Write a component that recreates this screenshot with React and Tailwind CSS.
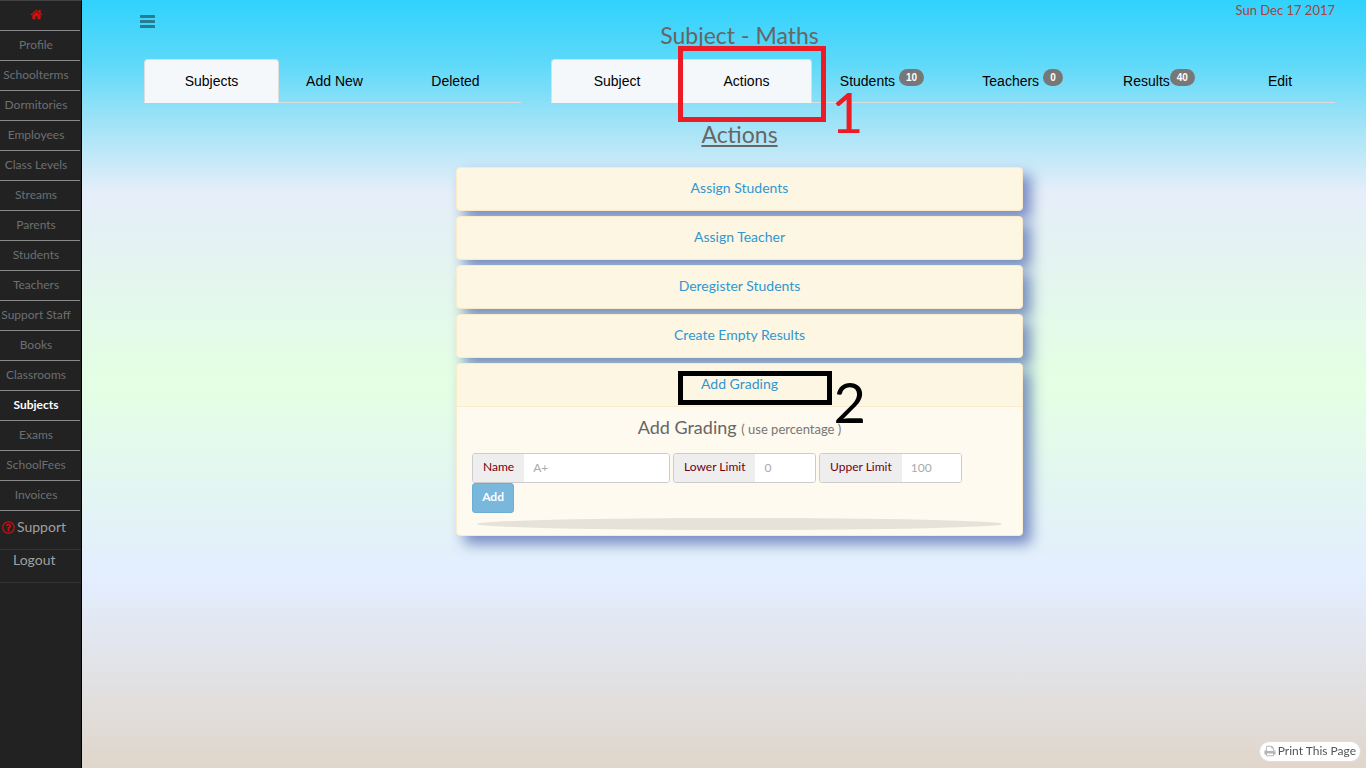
import React from "react";
import { FaRegQuestionCircle } from "react-icons/fa";

const menu = [
  "Profile", "Schoolterms", "Dormitories", "Employees", "Class Levels", "Streams",
  "Parents", "Students", "Teachers", "Support Staff", "Books", "Classrooms",
  "Subjects", "Exams", "SchoolFees", "Invoices",
];

const actions = ["Assign Students", "Assign Teacher", "Deregister Students", "Create Empty Results"];

function HomeIcon() {
  return (
    <svg viewBox="0 0 1792 1792" className="size-[13px]" fill="currentColor" aria-hidden="true">
      <path d="M1472 992v480q0 26-19 45t-45 19h-384v-384h-256v384h-384q-26 0-45-19t-19-45v-480q0-1 .5-3t.5-3l575-474 575 474q1 2 1 6zm223-69l-62 74q-8 9-21 11h-3q-13 0-21-7l-692-577-692 577q-12 8-24 7-13-2-21-11l-62-74q-8-10-7-23.5t11-21.5l719-599q32-26 76-26t76 26l244 204v-195q0-14 9-23t23-9h192q14 0 23 9t9 23v408l219 182q10 8 11 21.5t-7 23.5z" />
    </svg>
  );
}

function PrintIcon() {
  return (
    <svg viewBox="0 0 1792 1792" className="size-3 text-[#b5b5b5]" fill="currentColor" aria-hidden="true">
      <path d="M448 1536h896v-256h-896v256zm0-640h896v-384h-160q-40 0-68-28t-28-68v-160h-640v640zm1152 64q0-26-19-45t-45-19-45 19-19 45 19 45 45 19 45-19 19-45zm128 0v416q0 13-9.5 22.5t-22.5 9.5h-224v160q0 40-28 68t-68 28h-960q-40 0-68-28t-28-68v-160h-224q-13 0-22.5-9.5t-9.5-22.5v-416q0-79 56.5-135.5t135.5-56.5h64v-544q0-40 28-68t68-28h672q40 0 88 20t76 48l152 152q28 28 48 76t20 88v256h64q79 0 135.5 56.5t56.5 135.5z" />
    </svg>
  );
}

function Sidebar() {
  return (
    <nav className="w-[82px] shrink-0 border-r border-t border-r-black border-t-[#444] bg-[#222] text-center">
      <ul className="mr-px text-xs text-[#6c7073]">
        <li className="h-[30px] border-b border-[#8a8a8a]">
          <a href="#home" aria-label="Home" className="flex h-full items-center justify-center pb-[2px] pr-2 text-[#d01010]">
            <HomeIcon />
          </a>
        </li>
        {menu.map((m) => (
          <li key={m} className="h-[30px] border-b border-[#8a8a8a]">
            <a
              href="#menu"
              className={
                "flex h-full items-center justify-center whitespace-nowrap pb-[2px] pr-2 " +
                (m === "Subjects" ? "font-bold text-white" : "")
              }
            >
              {m}
            </a>
          </li>
        ))}
      </ul>
      <a href="#support" className="flex h-[39px] items-center gap-[2px] border-b border-[#333] pb-[6px] pl-[2px] text-sm text-[#a0a0a0]">
        <FaRegQuestionCircle className="size-[13px] text-[#d01010]" />
        Support
      </a>
      <a href="#logout" className="flex h-[33px] items-center border-b border-[#333] pb-3 pl-[13px] text-sm text-[#a0a0a0]">
        Logout
      </a>
    </nav>
  );
}

function Tab({ label, active, first, last, badge, tight, children }) {
  return (
    <a
      href="#tab"
      className={
        "relative flex h-11 items-center justify-center whitespace-nowrap border-b text-sm text-black " +
        (active
          ? "border-b-[#f4f8fb] border-t border-t-[#ddd] bg-[#f4f8fb] "
          : "border-[#ddd] ") +
        (first ? "rounded-tl border-l border-l-[#ddd] " : "") +
        (last ? "rounded-tr border-r border-r-[#ddd]" : "")
      }
    >
      {label}
      {badge && (
        <span
          className={
            "mb-[6px] rounded-full bg-[#777] px-[7px] text-[10px] font-bold leading-[17px] text-white " +
            (tight ? "" : "ml-1")
          }
        >
          {badge}
        </span>
      )}
      {children}
    </a>
  );
}

function Field({ id, label, placeholder, className }) {
  return (
    <div className={"flex h-[30px] overflow-hidden rounded-[3px] border border-[#ccc] bg-white text-xs " + className}>
      <label htmlFor={id} className="flex shrink-0 items-center bg-[#eee] px-[10px] pb-[2px] text-[#700010]">
        {label}
      </label>
      <input
        id={id}
        type="text"
        placeholder={placeholder}
        className="w-full min-w-0 bg-white px-[9px] outline-none placeholder:text-[#aaa]"
      />
    </div>
  );
}

const panel = "rounded border border-[#faebcc] shadow-[8px_8px_14px_rgba(29,56,153,0.55)]";

export default function App() {
  return (
    <div className="flex min-h-screen font-['Lato',sans-serif] text-[#666]">
      <Sidebar />
      <main className="min-w-0 flex-1 bg-[linear-gradient(#30d2fd_0%,#5cd9f9_8%,#a0e3f7_16%,#e5eef9_25%,#e3ffe3_50%,#e3eeff_75%,#e0d6cb_100%)] pl-[62px] pr-[31px]">
        <header className="relative h-[59px]">
          <button type="button" aria-label="Toggle menu" className="absolute -left-1 top-[15px] text-[#287c92]">
            <svg viewBox="0 0 15 13" className="h-[13px] w-[15px]" fill="currentColor">
              <rect width="15" height="3" rx="0.5" />
              <rect y="5" width="15" height="3" rx="0.5" />
              <rect y="10" width="15" height="3" rx="0.5" />
            </svg>
          </button>
          <h1 className="pt-5 text-center text-[23px] leading-[30px]">Subject - Maths</h1>
          <span className="absolute right-0 top-0 text-[13px] leading-5 text-[#a8423f]">Sun Dec 17 2017</span>
        </header>

        <div className="grid grid-cols-[377fr_784fr] gap-x-[30px] font-['Liberation_Sans',Arial,sans-serif]">
          <nav className="grid grid-cols-[135fr_111fr_131fr]">
            <Tab label="Subjects" active first last />
            <Tab label="Add New" />
            <Tab label="Deleted" />
          </nav>
          <nav className="grid grid-cols-[131fr_130fr_140fr_141fr_132fr_110fr]">
            <Tab label="Subject" active first />
            <Tab label="Actions" active last>
              <span className="pointer-events-none absolute -bottom-5 -left-1 -right-[15px] -top-[14px] z-10 border-5 border-[#ed1c24]" />
              <span className="pointer-events-none absolute left-full top-8 z-10 ml-5 font-['Lato',sans-serif] text-[56px] leading-10 text-[#ed1c24]">
                1
              </span>
            </Tab>
            <Tab label="Students" badge="10" />
            <Tab label="Teachers" badge="0" />
            <Tab label="Results" badge="40" tight />
            <Tab label="Edit" />
          </nav>
        </div>

        <h2 className="mb-[18px] mt-4 text-center text-[23px] leading-[30px] underline underline-offset-2">Actions</h2>

        <div className="mx-auto flex w-[47.6%] flex-col gap-[5px]">
          {actions.map((a) => (
            <a
              key={a}
              href="#action"
              className={"relative flex h-11 items-center justify-center bg-[#fdf6e3] pb-[2px] text-sm text-[#3097d1] " + panel}
            >
              {a}
            </a>
          ))}
          <section className={"relative bg-[#fefaef] " + panel}>
            <a
              href="#grading"
              className="relative flex h-[43px] items-center justify-center rounded-t border-b border-[#faebcc] bg-[#fdf6e3] pb-[2px] text-sm text-[#3097d1]"
            >
              Add Grading
              <span className="pointer-events-none absolute left-1/2 top-[7px] -ml-[62px] h-[34px] w-[154px] border-5 border-black" />
              <span className="pointer-events-none absolute left-1/2 top-[18px] z-10 ml-[94px] text-[56px] leading-10 text-black">
                2
              </span>
            </a>
            <div className="px-[15px] pb-[5px] pt-[10px]">
              <h3 className="text-center text-lg leading-5">
                Add Grading <small className="text-[13px] text-[#777]">( use percentage )</small>
              </h3>
              <form className="mt-[14px]" onSubmit={(e) => e.preventDefault()}>
                <div className="flex gap-[3px]">
                  <Field id="name" label="Name" placeholder="A+" className="w-[198px]" />
                  <Field id="lower" label="Lower Limit" placeholder="0" className="w-[143px]" />
                  <Field id="upper" label="Upper Limit" placeholder="100" className="w-[143px]" />
                </div>
                <button
                  type="submit"
                  className="block h-[30px] w-[42px] rounded-[3px] border border-[#6cafd3] bg-[#79b8dc] pb-[2px] text-xs font-bold text-white"
                >
                  Add
                </button>
              </form>
              <div className="mx-[5px] mt-[5px] h-3 rounded-[50%] bg-[#e6e2d9]" />
            </div>
          </section>
        </div>
      </main>

      <button
        type="button"
        className="fixed bottom-[6px] right-[5px] flex h-[21px] items-center gap-[2px] rounded-full border border-[#ddd] bg-white px-1 pb-px text-xs text-[#555]"
      >
        <PrintIcon />
        Print This Page
      </button>
    </div>
  );
}
